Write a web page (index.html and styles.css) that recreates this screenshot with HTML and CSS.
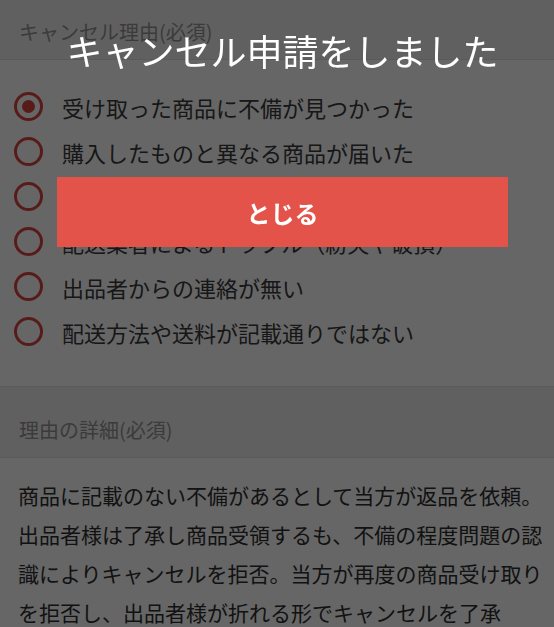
FILE: index.html
```html
<!DOCTYPE html>
<html lang="ja">
<head>
    <meta charset="UTF-8">
    <meta name="viewport" content="width=device-width, initial-scale=1.0">
    <title>キャンセル申請</title>
    <link rel="stylesheet" href="styles.css">
</head>
<body>
    <div class="page">
        <section class="field">
            <div class="field-label">キャンセル理由(必須)</div>
            <ul class="reasons">
                <li class="reason selected"><span class="radio"></span>受け取った商品に不備が見つかった</li>
                <li class="reason"><span class="radio"></span>購入したものと異なる商品が届いた</li>
                <li class="reason"><span class="radio"></span>商品が届かない</li>
                <li class="reason"><span class="radio"></span>配送業者によるトラブル（紛失や破損）</li>
                <li class="reason"><span class="radio"></span>出品者からの連絡が無い</li>
                <li class="reason"><span class="radio"></span>配送方法や送料が記載通りではない</li>
            </ul>
        </section>

        <section class="field field-detail">
            <div class="field-label">理由の詳細(必須)</div>
            <p class="detail">商品に記載のない不備があるとして当方が返品を依頼。出品者様は了承し商品受領するも、不備の程度問題の認識によりキャンセルを拒否。当方が再度の商品受け取りを拒否し、出品者様が折れる形でキャンセルを了承</p>
        </section>
    </div>

    <!-- 完了ダイアログ -->
    <div class="overlay">
        <div class="dialog">
            <p class="dialog-title">キャンセル申請をしました</p>
            <button class="close-button">とじる</button>
        </div>
    </div>
</body>
</html>
```

FILE: styles.css
```css
body {
    margin: 0;
    padding: 0;
    background: #f0f0f0;
    font-family: "Noto Sans CJK JP", "Noto Sans", sans-serif;
    color: #333;
}

.page {
    width: 554px;
}

.field-label {
    height: 60px;
    box-sizing: border-box;
    padding: 20px 0 0 19px;
    font-size: 20px;
    line-height: 24px;
    color: #949494;
    background: #f0f0f0;
    border-bottom: 1px solid #e0e0e0;
}

.reasons {
    list-style: none;
    margin: 0;
    padding: 24px 0 32px 0;
    background: #fff;
    border-bottom: 1px solid #e0e0e0;
}

.reason {
    display: flex;
    align-items: center;
    height: 45px;
    padding-left: 14px;
    font-size: 22px;
    color: #3a3a3a;
}

.radio {
    width: 29px;
    height: 29px;
    box-sizing: border-box;
    border: 3px solid #d9473f;
    border-radius: 50%;
    margin-right: 19px;
    display: flex;
    align-items: center;
    justify-content: center;
}

.reason.selected .radio::after {
    content: "";
    width: 13px;
    height: 13px;
    border-radius: 50%;
    background: #d9473f;
}

.field-detail {
    margin-top: 11px;
}

.detail {
    margin: 0;
    padding: 18px 8px 30px 18px;
    background: #fff;
    font-size: 21px;
    line-height: 39px;
    color: #2e2e2e;
}

/* 完了ダイアログ */
.overlay {
    position: fixed;
    top: 0;
    left: 0;
    right: 0;
    bottom: 0;
    background: rgba(0, 0, 0, 0.6);
}

.dialog {
    position: absolute;
    top: 25px;
    left: 57px;
    width: 451px;
}

.dialog-title {
    margin: 0 0 102px 0;
    height: 50px;
    font-size: 36px;
    line-height: 50px;
    color: #fff;
    text-align: center;
    white-space: nowrap;
}

.close-button {
    display: block;
    width: 451px;
    height: 70px;
    border: none;
    background: #e3534a;
    color: #fff;
    font-family: inherit;
    font-size: 24px;
    font-weight: bold;
    cursor: pointer;
}
```
